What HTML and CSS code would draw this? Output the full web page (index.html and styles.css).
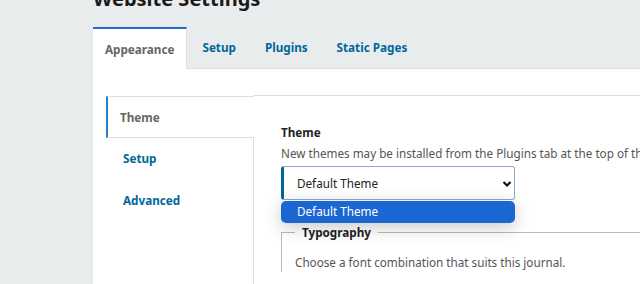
FILE: index.html
```html
<!DOCTYPE html>
<html lang="en">
<head>
    <meta charset="UTF-8">
    <meta name="viewport" content="width=device-width, initial-scale=1.0">
    <title>Website Settings</title>
    <link rel="stylesheet" href="styles.css">
</head>
<body>

<div class="page">
    <h1 class="page-title">Website Settings</h1>

    <div class="tabs">
        <span class="tab tab-active">Appearance</span>
        <span class="tab">Setup</span>
        <span class="tab">Plugins</span>
        <span class="tab">Static Pages</span>
    </div>

    <div class="panel">
        <div class="side-nav">
            <div class="side-item side-active">Theme</div>
            <div class="side-item">Setup</div>
            <div class="side-item">Advanced</div>
        </div>

        <div class="content">
            <div class="field-label">Theme</div>
            <div class="field-desc">New themes may be installed from the Plugins tab at the top of this page.</div>
            <div class="select">
                <span>Default Theme</span>
                <svg class="chevron" width="10" height="8" viewBox="0 0 10 8">
                    <polyline points="1.5,2 5,5.5 8.5,2" fill="none" stroke="#111" stroke-width="2.2"/>
                </svg>
                <div class="listbox">
                    <div class="option">Default Theme</div>
                </div>
            </div>

            <fieldset class="group">
                <legend>Typography</legend>
                <p>Choose a font combination that suits this journal.</p>
            </fieldset>
        </div>
    </div>
</div>

</body>
</html>
```

FILE: styles.css
```css
html, body {
    margin: 0;
    overflow: hidden;
}
body {
    font-family: "Noto Sans", "Open Sans", sans-serif;
    font-size: 11.7px;
    background-color: #e9eced;
    color: #222;
}
.page {
    width: 900px;
    padding-left: 93px;
}
.page-title {
    margin: -13px 0 16px;
    font-size: 20px;
    line-height: 24px;
    font-weight: bold;
    color: #1a1a1a;
}
.tabs {
    display: flex;
    height: 41px;
    position: relative;
    z-index: 1;
}
.tab {
    display: flex;
    align-items: center;
    padding: 0 14.5px 1px;
    font-weight: bold;
    color: #006798;
}
.tab-active {
    padding: 0 12px;
    margin-right: 0.5px;
    background-color: #fff;
    border-top: 2px solid #1e6fc9;
    border-right: 1px solid #ddd;
    height: 40px;
    color: #666;
}
.panel {
    display: flex;
    background-color: #fff;
    border-top: 1px solid #ddd;
    padding: 26px 0 0 13px;
    height: 300px;
}
.side-nav {
    flex: 0 0 147px;
    margin-top: 1px;
}
.side-item {
    height: 42px;
    line-height: 40px;
    padding-left: 17px;
    font-weight: bold;
    color: #006798;
}
.side-active {
    position: relative;
    z-index: 1;
    height: 40px;
    line-height: 40px;
    margin-right: -1px;
    padding-left: 12px;
    background-color: #fff;
    border-left: 2px solid #1e7fd0;
    border-top: 1px solid #ddd;
    border-bottom: 1px solid #ddd;
    color: #666;
}
.content {
    flex: 1;
    border-top: 1px solid #ddd;
    border-left: 1px solid #ddd;
    padding: 26px 0 0 27px;
}
.field-label {
    line-height: 20px;
    margin-bottom: 1px;
    font-weight: bold;
}
.field-desc {
    line-height: 20px;
    margin-bottom: 3px;
    white-space: nowrap;
    color: #555;
}
.select {
    position: relative;
    display: flex;
    align-items: center;
    justify-content: space-between;
    box-sizing: border-box;
    width: 234px;
    height: 34px;
    padding: 0 2px 0 13px;
    border: 1px solid #8ea9c6;
    border-left: 3px solid #006798;
    border-radius: 3px;
    background-color: #fff;
}
.chevron {
    margin-top: 1px;
}
.listbox {
    position: absolute;
    z-index: 2;
    left: -3px;
    top: 34px;
    width: 234px;
    box-shadow: 0 4px 18px rgba(0,0,0,0.22);
    border-radius: 5px;
}
.option {
    height: 22px;
    line-height: 21px;
    padding-left: 16px;
    border-radius: 5px;
    background-color: #1a66d2;
    color: #fff;
}
.group {
    margin: 23px 0 0;
    padding: 0 13px;
    border: 1px solid #bbb;
    border-right: none;
    border-bottom: none;
}
.group legend {
    padding: 0 7px;
    line-height: 18px;
    font-weight: bold;
}
.group p {
    margin: 11px 0 0;
    line-height: 20px;
    color: #555;
}
```
